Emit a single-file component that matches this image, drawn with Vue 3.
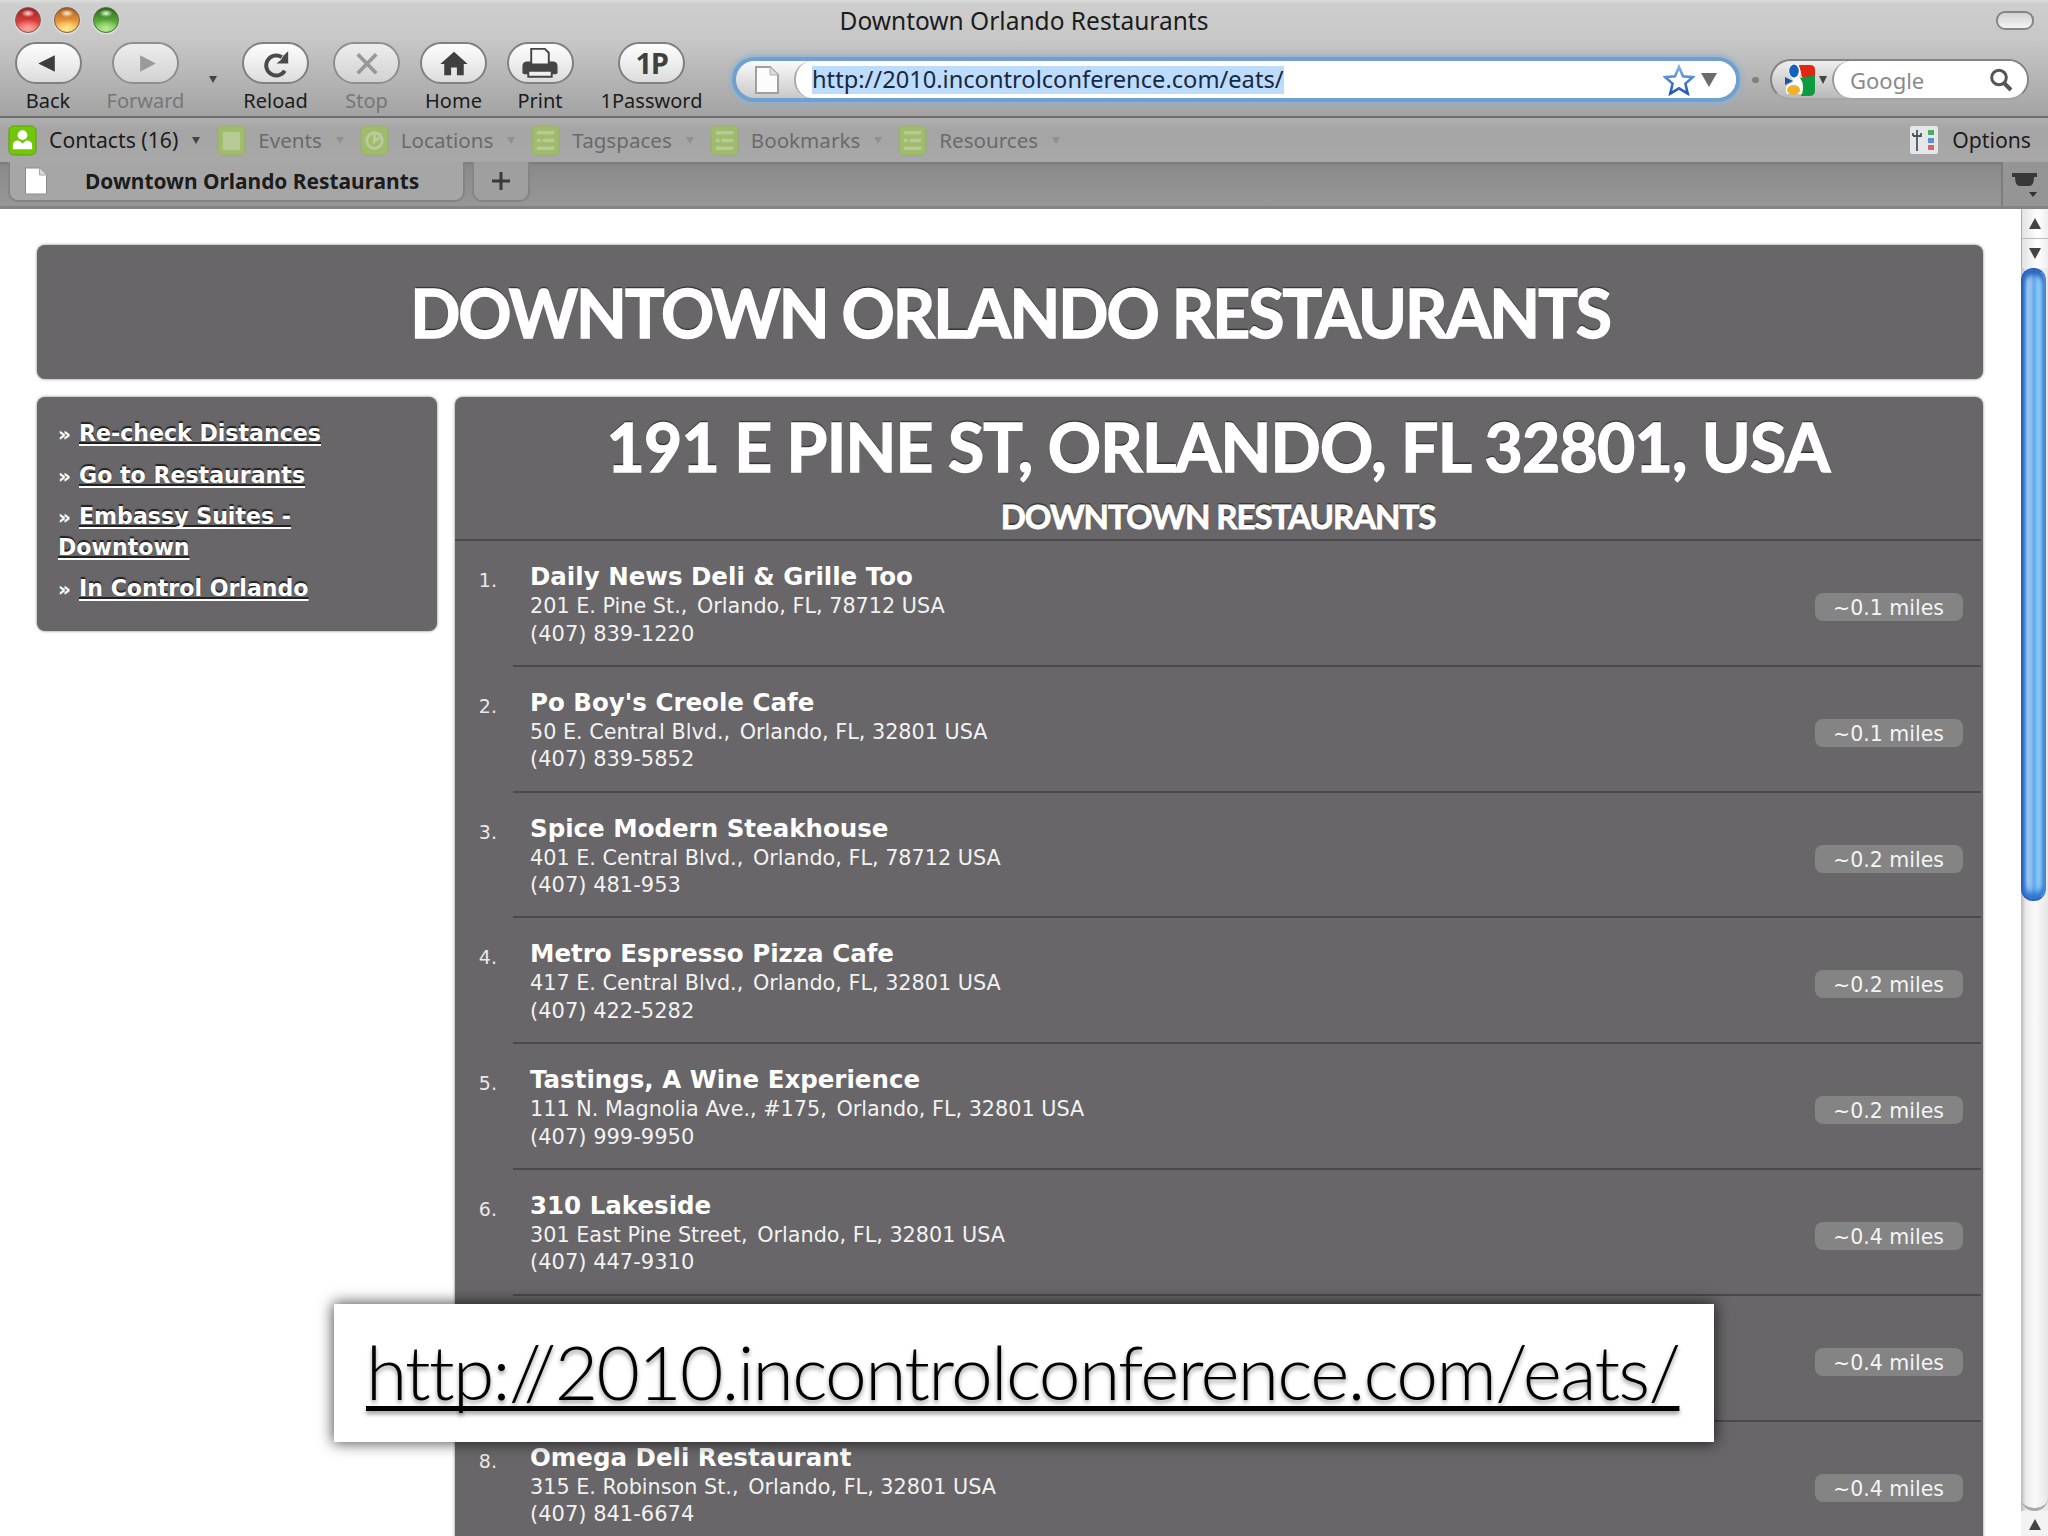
<template>
  <div class="window">
    <header class="titlebar">
      <div class="lights">
        <span class="light red"></span>
        <span class="light yellow"></span>
        <span class="light green"></span>
      </div>
      <h1 class="window-title">Downtown Orlando Restaurants</h1>
      <span class="pill"></span>
    </header>

    <div class="toolbar">
      <div class="tools">
        <template v-for="tool in tools" :key="tool.label">
          <div class="tool" :class="{ disabled: tool.disabled }">
            <button class="tool-btn">
              <span v-if="tool.icon === 'onep'" class="onep">1P</span>
              <svg v-else viewBox="0 0 40 40" width="40" height="40">
                <path v-if="tool.icon === 'back'" d="M10 20 27 11.500v17z" fill="#3d3d3d" />
                <path v-if="tool.icon === 'forward'" d="M30 20 14 11.500v17z" fill="#9a9a9a" />
                <g v-if="tool.icon === 'reload'" fill="none" stroke="#4a4a4a" stroke-width="4">
                  <path d="M26 13.500A10.300 10.300 0 1 0 29 27.500" />
                  <path d="M32.500 7.500v12.500H20.500l4.500-3.500 3-5z" fill="#4a4a4a" stroke="none" />
                </g>
                <path v-if="tool.icon === 'stop'" d="M10.500 10.500 29.500 30M29.500 10.500 10.500 30" stroke="#989898" stroke-width="3.800" />
                <path v-if="tool.icon === 'home'" d="M20 8 34 20.500h-4v11.500h-7v-8h-6v8h-7V20.500H6z" fill="#3f3f3f" />
                <g v-if="tool.icon === 'print'">
                  <path d="M2 23q0-5 5-5h26q5 0 5 5v6q0 2-2 2H4q-2 0-2-2z" fill="#454545" />
                  <path d="M11 5h14l4 4v12H11z" fill="#f7f7f7" stroke="#454545" stroke-width="2" />
                  <path d="M8 27.500h24v6H8z" fill="#eee" stroke="#454545" stroke-width="2" />
                </g>
              </svg>
            </button>
            <span class="tool-label">{{ tool.label }}</span>
          </div>
          <span v-if="tool.icon === 'forward'" class="history-arrow"></span>
        </template>
      </div>

      <div class="url-field">
        <span class="url-icon">
          <svg viewBox="0 0 26 30" width="26" height="30">
            <path d="M2 2h14l8 8v18H2z" fill="#fcfcfc" stroke="#a0a0a0" stroke-width="2" />
            <path d="M16 2v8h8" fill="#ddd" stroke="#b0b0b0" />
          </svg>
        </span>
        <div class="url-body">
          <span class="url-text">{{ url }}</span>
          <svg class="star" viewBox="0 0 32 32" width="32" height="32">
            <defs>
              <linearGradient id="starStroke" x1="0" y1="0" x2="0" y2="1">
                <stop offset="0" stop-color="#7db3e6" />
                <stop offset="1" stop-color="#1f53bd" />
              </linearGradient>
            </defs>
            <path d="M16 3l4 9.300 10 .8-7.600 6.500 2.300 9.900L16 24.300 7.300 29.500l2.300-9.900L2 13.100l10-.8z" fill="#fff" stroke="url(#starStroke)" stroke-width="2.600" />
          </svg>
          <span class="drop"></span>
        </div>
      </div>

      <span class="splitter"></span>

      <div class="search">
        <span class="engine">
          <svg viewBox="0 0 30 32" width="30" height="32">
            <path d="M14 1h11q5 0 5 5v7H17z" fill="#e2260f" />
            <path d="M13 16q3-4 17-4v14q0 6-5 6h-9q3-8-3-16z" fill="#0c9b41" />
            <path d="M12 0q6 8 2 13 6 6 3 17H2q-4-7 4-11 4-2 0-6Q1 7 6 0z" fill="#fff" />
            <ellipse cx="9" cy="7" rx="4.800" ry="6.500" fill="#1561c0" />
            <path d="M0 13l8 4-8 4z" fill="#1f55a5" />
            <ellipse cx="8.500" cy="26" rx="6.500" ry="5" fill="#efb22b" />
          </svg>
          <i class="engine-arrow"></i>
        </span>
        <span class="search-body">
          <span class="search-text">Google</span>
          <svg viewBox="0 0 24 24" width="24" height="24">
            <circle cx="10" cy="9.500" r="7.300" fill="none" stroke="#555" stroke-width="3" />
            <path d="M15 15l7 7" stroke="#555" stroke-width="4" />
          </svg>
        </span>
      </div>
    </div>

    <nav class="bookmarks">
      <div v-for="mark in bookmarks" :key="mark.label" class="mark" :class="{ faded: mark.icon !== 'contact' }">
        <svg viewBox="0 0 30 32" width="29" height="31">
          <rect x="1" y="1" width="28" height="30" rx="5" class="mark-box" />
          <g v-if="mark.icon === 'contact'" fill="#fff">
            <circle cx="15" cy="10.500" r="5" />
            <path d="M5 25v-4q0-5 6-5l4 3 4-3q6 0 6 5v4z" />
          </g>
          <rect v-if="mark.icon === 'event'" x="6" y="7" width="18" height="19" rx="2" fill="#b7ca95" />
          <g v-if="mark.icon === 'place'" fill="none" stroke="#bccb9f" stroke-width="3">
            <circle cx="15" cy="16" r="8" />
            <path d="M15 10v7l5-4" />
          </g>
          <path v-if="mark.icon === 'list'" d="M6 8h18M6 16h4M12 16h12M6 24h18" stroke="#b9ca99" stroke-width="3.500" />
        </svg>
        <span class="mark-label">{{ mark.label }}</span>
        <i class="mark-arrow"></i>
      </div>
      <div class="options">
        <svg viewBox="0 0 28 28" width="28" height="28">
          <rect width="28" height="28" rx="2" fill="#e4e7ea" />
          <path d="M7 4v21M3 10h4M7 10h4V7M3 7v3" stroke="#4d545c" stroke-width="1.800" fill="none" />
          <path d="M18 4h6v5h-6z" fill="#4cab5c" />
          <path d="M18 12h6v5h-6z" fill="#5c8fdb" />
          <path d="M18 19h6v5h-6z" fill="#d8685f" />
        </svg>
        <span class="mark-label">Options</span>
      </div>
    </nav>

    <div class="tabbar">
      <div class="tab">
        <svg viewBox="0 0 24 28" width="24" height="28">
          <path d="M1.500 1h14l7 7v19h-21z" fill="#fff" stroke="#8a8a8a" />
          <path d="M15.500 1v7h7" fill="#d8d8d8" stroke="#aaa" />
        </svg>
        <span class="tab-label">Downtown Orlando Restaurants</span>
      </div>
      <div class="new-tab">
        <svg viewBox="0 0 20 20" width="20" height="20">
          <path d="M10 1v18M1 10h18" stroke="#3a3a3a" stroke-width="3" />
        </svg>
      </div>
      <div class="tab-list">
        <svg viewBox="0 0 28 26" width="28" height="26">
          <path d="M1 1h25v4h-3q0 9-5 9H9q-5 0-5-9H1z" fill="#383838" />
          <path d="M18 20h8l-4 5z" fill="#333" />
        </svg>
      </div>
    </div>

    <div class="viewport">
      <main class="page">
        <div class="card banner">
          <h2 class="banner-title">Downtown Orlando Restaurants</h2>
        </div>
        <div class="columns">
          <aside class="card sidebar">
            <ul>
              <li v-for="link in links" :key="link">
                <span class="raquo">»</span><a href="#">{{ link }}</a>
              </li>
            </ul>
          </aside>
          <section class="card listing">
            <div class="listing-head">
              <h2 class="address">191 E Pine St, Orlando, FL 32801, USA</h2>
              <h3 class="area">Downtown Restaurants</h3>
            </div>
            <div v-for="(place, i) in places" :key="i" class="row">
              <span class="num"><template v-if="place.name">{{ i + 1 }}.</template></span>
              <div class="place">
                <div class="info">
                  <strong class="name">{{ place.name }}</strong>
                  <span v-if="place.street" class="line">{{ place.street }}, <span class="city">{{ place.city }}</span></span>
                  <span class="line phone">{{ place.phone }}</span>
                </div>
                <span class="distance">~{{ place.miles }} miles</span>
              </div>
            </div>
          </section>
        </div>
      </main>
      <div class="scrollbar">
        <div class="sb-btn"><i class="up"></i></div>
        <div class="sb-btn last"><i class="down"></i></div>
        <div class="thumb"></div>
        <div class="track"></div>
        <div class="sb-end"><i class="up"></i></div>
      </div>
    </div>

    <div class="caption">
      <a href="#">{{ url }}</a>
    </div>
  </div>
</template>

<script setup>
const url = 'http://2010.incontrolconference.com/eats/'

const tools = [
  { label: 'Back', icon: 'back' },
  { label: 'Forward', icon: 'forward', disabled: true },
  { label: 'Reload', icon: 'reload' },
  { label: 'Stop', icon: 'stop', disabled: true },
  { label: 'Home', icon: 'home' },
  { label: 'Print', icon: 'print' },
  { label: '1Password', icon: 'onep' }
]

const bookmarks = [
  { label: 'Contacts (16)', icon: 'contact' },
  { label: 'Events', icon: 'event' },
  { label: 'Locations', icon: 'place' },
  { label: 'Tagspaces', icon: 'list' },
  { label: 'Bookmarks', icon: 'list' },
  { label: 'Resources', icon: 'list' }
]

const links = [
  'Re-check Distances',
  'Go to Restaurants',
  'Embassy Suites - Downtown',
  'In Control Orlando'
]

const places = [
  { name: 'Daily News Deli & Grille Too', street: '201 E. Pine St.', city: 'Orlando, FL, 78712 USA', phone: '(407) 839-1220', miles: '0.1' },
  { name: "Po Boy's Creole Cafe", street: '50 E. Central Blvd.', city: 'Orlando, FL, 32801 USA', phone: '(407) 839-5852', miles: '0.1' },
  { name: 'Spice Modern Steakhouse', street: '401 E. Central Blvd.', city: 'Orlando, FL, 78712 USA', phone: '(407) 481-953', miles: '0.2' },
  { name: 'Metro Espresso Pizza Cafe', street: '417 E. Central Blvd.', city: 'Orlando, FL, 32801 USA', phone: '(407) 422-5282', miles: '0.2' },
  { name: 'Tastings, A Wine Experience', street: '111 N. Magnolia Ave., #175', city: 'Orlando, FL, 32801 USA', phone: '(407) 999-9950', miles: '0.2' },
  { name: '310 Lakeside', street: '301 East Pine Street', city: 'Orlando, FL, 32801 USA', phone: '(407) 447-9310', miles: '0.4' },
  { name: '', street: '', city: '', phone: '', miles: '0.4' },
  { name: 'Omega Deli Restaurant', street: '315 E. Robinson St.', city: 'Orlando, FL, 32801 USA', phone: '(407) 841-6674', miles: '0.4' }
]
</script>

<style>
body {
  background: #fff;
  overflow: hidden;
}
</style>

<style scoped>
.window {
  position: relative;
  display: flex;
  flex-direction: column;
  width: 2048px;
  height: 1536px;
  overflow: hidden;
  box-sizing: border-box;
  background: linear-gradient(#dcdedc 0, #cdcecd 4px, #c6c7c6 40px, #a3a3a3 116px);
  font-family: "Noto Sans", sans-serif;
  color: #1c1c1c;
}

.window * {
  box-sizing: border-box;
}

h1, h2, h3, ul {
  margin: 0;
  padding: 0;
}

/* title bar */
.titlebar {
  flex: 0 0 42px;
  display: grid;
  grid-template-columns: 200px 1fr 200px;
  align-items: start;
}

.lights {
  display: flex;
  gap: 13px;
  padding: 7px 0 0 15px;
}

.light {
  width: 26px;
  height: 26px;
  border-radius: 50%;
  border: 1px solid #7a5a52;
  box-shadow: 0 1px 2px #eee;
}

.red {
  background: radial-gradient(ellipse 7px 4px at 50% 22%, #ffd9d6, transparent), radial-gradient(ellipse 13px 9px at 50% 85%, #ffa6a0, transparent), linear-gradient(#9c1d1c, #e0403e 60%, #f07c78);
}

.yellow {
  background: radial-gradient(ellipse 7px 4px at 50% 22%, #fff0d5, transparent), radial-gradient(ellipse 13px 9px at 50% 85%, #ffe88a, transparent), linear-gradient(#a95a19, #ee9b3d 60%, #f9cb62);
}

.green {
  border-color: #4d6a3f;
  background: radial-gradient(ellipse 7px 4px at 50% 22%, #e0ffd5, transparent), radial-gradient(ellipse 13px 9px at 50% 85%, #b6ec91, transparent), linear-gradient(#2b6419, #5fae3e 60%, #92d46c);
}

.window-title {
  text-align: center;
  font-size: 24.5px;
  font-weight: 400;
  line-height: 41px;
  height: 42px;
}

.pill {
  justify-self: end;
  width: 38px;
  height: 19px;
  margin: 11px 14px 0 0;
  border: 2px solid #858585;
  border-radius: 9px;
  background: linear-gradient(#d2d2d2, #f4f4f4);
}

/* toolbar */
.toolbar {
  flex: 0 0 76px;
  display: flex;
  align-items: flex-start;
  border-bottom: 2px solid #6d6d6d;
}

.tools {
  display: grid;
  grid-template-columns: 96px 99px 35px 91px 91px 83px 90px 133px;
}

.tool {
  display: flex;
  flex-direction: column;
  align-items: center;
}

.tool-btn {
  display: flex;
  align-items: center;
  justify-content: center;
  width: 67px;
  height: 42px;
  padding: 0;
  border: 2px solid #808080;
  border-radius: 21px;
  background: linear-gradient(#fdfdfd, #f0f0f0 45%, #dcdcdc);
}

.tool-btn svg {
  width: 40px;
  height: 39px;
}

.disabled .tool-btn {
  border-color: #8f8f8f;
  background: linear-gradient(#ededed, #d2d2d2);
}

.onep {
  font: 700 29px/36px "Open Sans", sans-serif;
  letter-spacing: -1.5px;
  color: #404040;
}

.tool-label {
  margin-top: 5px;
  font-size: 20px;
  line-height: 24px;
}

.disabled .tool-label {
  color: #777;
}

.history-arrow {
  margin: 34px 0 0 14px;
  width: 0;
  height: 0;
  border: 4px solid transparent;
  border-top: 7px solid #444;
  border-bottom: 0;
}

.url-field {
  display: flex;
  width: 1008px;
  height: 45px;
  margin: 15px 0 0 14px;
  border: 4px solid #719fce;
  border-radius: 23px;
  background: linear-gradient(#fafafa, #c9c9c9);
  box-shadow: 0 0 5px 2px #8fb0d3;
  overflow: hidden;
}

.url-icon {
  width: 58px;
  padding: 4px 0 0 18px;
}

.url-icon svg {
  display: block;
}

.url-body {
  flex: 1;
  display: flex;
  align-items: center;
  padding-left: 16px;
  background: #fff;
  border-left: 2px solid #aaa;
  border-radius: 18px 0 0 18px;
}

.url-text {
  height: 28px;
  line-height: 27px;
  font-size: 23.65px;
  color: #17283f;
  background: #bddcfb;
}

.star {
  margin-left: auto;
}

.drop {
  margin: 0 19px 0 6px;
  border: 8.5px solid transparent;
  border-top: 14px solid #6c6c6c;
  border-bottom: 0;
}

.splitter {
  width: 7px;
  height: 6px;
  margin: 35px 0 0 12px;
  border-radius: 3px;
  background: #808080;
}

.search {
  display: flex;
  width: 259px;
  height: 41px;
  margin: 17px 0 0 11px;
  border: 2px solid #838383;
  border-bottom-color: #a5a5a5;
  border-radius: 21px;
  background: linear-gradient(#eee, #b9b9b9);
  overflow: hidden;
}

.engine {
  display: flex;
  align-items: center;
  width: 60px;
  padding-left: 13px;
}

.engine-arrow {
  margin-left: 4px;
  border: 4.5px solid transparent;
  border-top: 8px solid #444;
  border-bottom: 0;
}

.search-body {
  flex: 1;
  display: flex;
  align-items: center;
  justify-content: space-between;
  padding: 0 14px 0 16px;
  background: #fff;
  border-left: 2px solid #999;
  border-radius: 19px 0 0 19px;
}

.search-text {
  font-size: 22px;
  line-height: 34px;
  color: #8a8a8a;
}

/* bookmarks bar */
.bookmarks {
  flex: 0 0 44px;
  display: flex;
  align-items: center;
  gap: 16px;
  padding: 0 17px 0 8px;
  background: linear-gradient(#b1b0b1, #a6a5a6 12px, #a9a8a9);
}

.mark,
.options {
  display: flex;
  align-items: center;
}

.mark:first-child {
  margin-right: 1px;
}

.mark-label {
  margin-left: 12px;
  padding-bottom: 1px;
  font-size: 21.2px;
  line-height: 30px;
}

.mark-box {
  fill: #73c70b;
  stroke: #5aa300;
}

.mark-arrow {
  margin-left: 14px;
  border: 4px solid transparent;
  border-top: 7px solid #444;
  border-bottom: 0;
}

.faded .mark-box {
  fill: #9fbb6c;
  stroke: #96b066;
}

.faded .mark-label {
  font-size: 20.6px;
  color: #6a6a6a;
}

.faded .mark-arrow {
  border-top-color: #909090;
}

.options {
  margin-left: auto;
}

.options .mark-label {
  margin-left: 14px;
}

/* tabs */
.tabbar {
  flex: 0 0 47px;
  display: flex;
  align-items: flex-start;
  gap: 7px;
  padding-left: 8px;
  border-bottom: 3px solid #848384;
  background: linear-gradient(#7c7b7c, #8b8a8b 4px, #989798);
}

.tab,
.new-tab {
  display: flex;
  align-items: center;
  height: 40px;
  border: 2px solid #858485;
  border-top: 0;
  border-radius: 0 0 10px 10px;
  background: #a7a6a7;
}

.tab {
  width: 457px;
  padding-left: 14px;
}

.tab-label {
  margin-left: 37px;
  font-size: 20.9px;
  font-weight: 700;
  line-height: 30px;
}

.new-tab {
  width: 58px;
  justify-content: center;
  background: #a09fa0;
}

.tab-list {
  width: 47px;
  height: 44px;
  margin-left: auto;
  padding: 10px 0 0 8px;
  border-left: 2px solid #7d7c7d;
  background: #969596;
}

/* page */
.viewport {
  flex: 1;
  display: flex;
  min-height: 0;
  background: #fff;
}

.page {
  flex: 1;
  padding: 36px 38px 0 37px;
  font-family: "DejaVu Sans", sans-serif;
  color: #fff;
  overflow: hidden;
}

.card {
  background: #686668;
  border-radius: 8px;
  box-shadow: 0 0 3px #7b7a7b;
}

.banner {
  height: 134px;
}

.banner-title,
.address,
.area {
  font-family: Lato, sans-serif;
  font-weight: 700;
  text-align: center;
  text-transform: uppercase;
  white-space: nowrap;
  text-shadow: 0 -2px 1px #333;
  -webkit-text-stroke: 1.3px #fff;
}

.banner-title {
  padding-top: 15px;
  font-size: 66px;
  line-height: 105px;
  letter-spacing: -2px;
}

.columns {
  display: grid;
  grid-template-columns: 400px 1fr;
  align-items: start;
  gap: 18px;
  margin-top: 18px;
}

.sidebar {
  height: 234px;
  padding: 21px 40px 0 21px;
}

.sidebar ul {
  list-style: none;
}

.sidebar li {
  margin-bottom: 10.7px;
  font-size: 22.1px;
  line-height: 30px;
}

.sidebar a {
  color: #fff;
  font-weight: 700;
  text-decoration: underline;
  text-decoration-thickness: 2px;
  text-underline-offset: 3px;
  text-decoration-skip-ink: none;
  text-shadow: 0 -2px 1px #222;
}

.raquo {
  display: inline-block;
  width: 21px;
  font-size: 20px;
  font-weight: 700;
}

.listing {
  height: 1180px;
  padding-right: 2px;
}

.listing-head {
  height: 144px;
  padding-top: 10px;
  border-bottom: 2px solid #4b494b;
}

.address {
  font-size: 66px;
  line-height: 80px;
  letter-spacing: -0.78px;
}

.area {
  margin-top: 14px;
  font-size: 33px;
  line-height: 30px;
  letter-spacing: -1px;
  -webkit-text-stroke-width: 0.8px;
}

.row {
  display: grid;
  grid-template-columns: 58px 1fr;
  height: 125.8px;
}

.num {
  padding: 24px 16px 0 0;
  font-size: 19px;
  line-height: 30px;
  text-align: right;
  color: #e9e9e9;
}

.place {
  display: flex;
  justify-content: space-between;
  align-items: flex-start;
  padding: 20px 18px 0 17px;
  border-bottom: 2px solid #4b494b;
}

.info {
  display: flex;
  flex-direction: column;
}

.name {
  font-size: 24.5px;
  line-height: 32px;
}

.line {
  font-size: 20.75px;
  line-height: 27.5px;
  color: #f2f2f2;
}

.phone {
  font-size: 21px;
}

.city {
  margin-left: 3px;
}

.distance {
  width: 148px;
  height: 28px;
  margin-top: 32px;
  padding-left: 18px;
  border-radius: 8px;
  background: #858485;
  font-size: 20.5px;
  line-height: 30px;
  color: #f4f4f4;
}

/* scrollbar */
.scrollbar {
  width: 27px;
  display: flex;
  flex-direction: column;
  background: linear-gradient(90deg, #b9b9b9, #ececec 5px, #fafafa 14px, #e6e6e6);
}

.sb-btn {
  display: flex;
  align-items: center;
  justify-content: center;
  height: 30px;
  border-left: 1px solid #aaa;
  border-bottom: 1px solid #bbb;
  background: linear-gradient(90deg, #e2e2e2, #fff 60%, #eee);
}

.sb-btn.last {
  height: 29px;
  border-bottom: 0;
}

.up {
  border: 6px solid transparent;
  border-bottom: 11px solid #444;
  border-top: 0;
}

.down {
  border: 6px solid transparent;
  border-top: 11px solid #444;
  border-bottom: 0;
}

.thumb {
  width: 25px;
  height: 633px;
  border: 2px solid #2c62b6;
  border-right-color: #4c87c9;
  border-radius: 12px;
  background: linear-gradient(90deg, #4a8cdd, #a5cdf5 20%, #8abdf0 40%, #62a5e8 52%, #8fd0fb 75%, #8dd2f8);
  box-shadow: inset 0 -6px 6px #2b73cf, inset 0 5px 5px #2b62b8;
}

.track {
  flex: 1;
  border-bottom: 3px solid #aaa;
  border-radius: 0 0 13px 13px;
}

.sb-end {
  display: flex;
  justify-content: center;
  align-items: flex-start;
  height: 25px;
  padding-top: 8px;
  background: #f3f3f3;
}

/* caption laid over the window */
.caption {
  position: absolute;
  left: 334px;
  top: 1304px;
  width: 1380px;
  height: 138px;
  padding-left: 32px;
  background: #fff;
  box-shadow: 0 0 14px 1px rgba(0, 0, 0, 0.7);
}

.caption a {
  display: block;
  font: 300 75px/134px Lato, sans-serif;
  letter-spacing: -1.72px;
  white-space: nowrap;
  color: #000;
  text-decoration: underline;
  text-decoration-thickness: 5px;
  text-underline-offset: 6px;
  text-decoration-skip-ink: none;
  text-shadow: 0 3px 4px rgba(0, 0, 0, 0.4);
}
</style>
